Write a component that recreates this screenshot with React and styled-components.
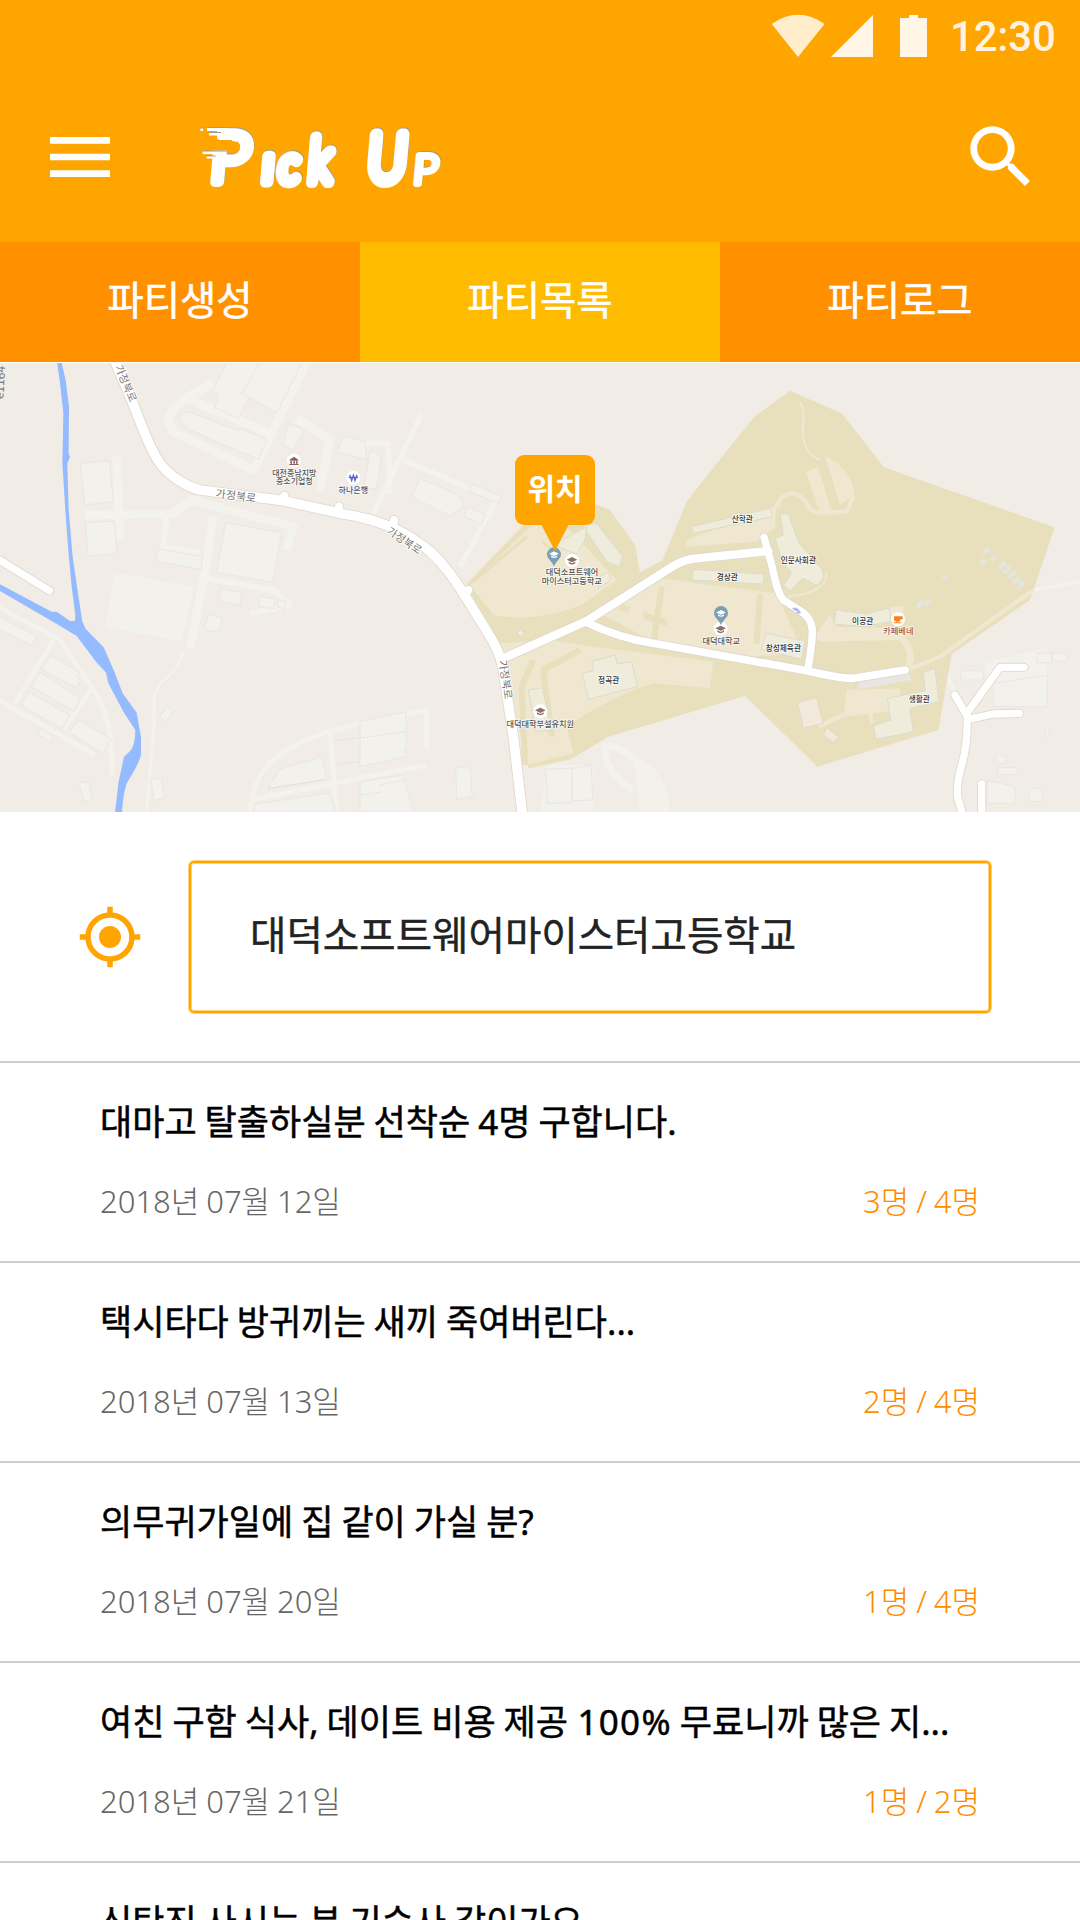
import React from "react";
import styled, { createGlobalStyle } from "styled-components";
import { MdMenu, MdSearch, MdMyLocation } from "react-icons/md";

const GlobalStyle = createGlobalStyle`
  * { box-sizing: border-box; }
  html, body { margin: 0; padding: 0; background: #fff; }
  body { font-family: "Noto Sans", "Noto Sans CJK KR", sans-serif; overflow: hidden; }
`;

const Screen = styled.div`
  width: 1080px;
  height: 1920px;
  overflow: hidden;
  display: flex;
  flex-direction: column;
  background: #fff;
`;

const Header = styled.header`
  height: 242px;
  flex: none;
  background: #ffa500;
  color: #fff;
`;

const StatusBar = styled.div`
  height: 72px;
  display: flex;
  justify-content: flex-end;
  padding: 0 24px 0 0;
`;

const StatusIcons = styled.svg`
  width: 160px;
  height: 72px;
  margin-right: 20px;
  display: block;
`;

const Clock = styled.span`
  width: 106px;
  font: 500 42px/73px Roboto, sans-serif;
  letter-spacing: -0.2px;
  color: rgba(255, 255, 255, 0.9);
  white-space: nowrap;
`;

const AppBar = styled.div`
  height: 170px;
  display: flex;
  align-items: center;
  padding: 0 38px 0 40px;
`;

const IconButton = styled.button`
  border: 0;
  padding: 0;
  background: none;
  color: inherit;
  display: flex;
  font-size: ${(p) => p.$size}px;
`;

const Logo = styled.svg`
  width: 260px;
  height: 85px;
  margin: 1px auto 0 70px;
  display: block;
  overflow: visible;
`;

const Tabs = styled.nav`
  height: 120px;
  flex: none;
  display: grid;
  grid-template-columns: repeat(3, 1fr);
`;

const Tab = styled.button`
  border: 0;
  padding: 0 0 9px;
  background: ${(p) => (p.$active ? "#ffbb00" : "#ff9100")};
  color: #fff;
  font: 400 39.5px/1 "Noto Sans CJK KR", sans-serif;
  -webkit-text-stroke: 0.5px currentColor;
`;

const MapArea = styled.section`
  position: relative;
  height: 449px;
  margin-top: 1px;
  flex: none;
`;

const MapCanvas = styled.svg`
  width: 1080px;
  height: 449px;
  display: block;
`;

const Marker = styled.div`
  position: absolute;
  left: 515px;
  top: 92px;
  width: 80px;
  height: 70px;
  border-radius: 9px;
  background: #ffa500;
  color: #fff;
  display: flex;
  justify-content: center;
  font: 700 30px/64px "Noto Sans CJK KR", sans-serif;

  &::after {
    content: "";
    position: absolute;
    left: 26px;
    top: 69px;
    border: solid transparent;
    border-width: 27px 14px 0;
    border-top-color: #ffa500;
  }
`;

const SearchRow = styled.section`
  height: 249px;
  flex: none;
  display: flex;
  align-items: center;
  padding: 0 89px 0 77px;
  gap: 46px;
  color: #ffa500;
`;

const PlaceField = styled.div`
  flex: 1;
  height: 152px;
  border: 2px solid #ffa500;
  border-radius: 5px;
  box-shadow: 0 0 0 1px rgba(255, 165, 0, 0.5), inset 0 0 0 1px rgba(255, 165, 0, 0.5);
  display: flex;
  align-items: center;
  padding: 0 59px 8px;
  color: #222;
  font: 400 39.6px/1 "Noto Sans CJK KR", sans-serif;
  -webkit-text-stroke: 0.4px currentColor;
  white-space: nowrap;
`;

const List = styled.ul`
  list-style: none;
  margin: 0;
  padding: 0;
`;

const Row = styled.li`
  height: 200px;
  border-top: 2px solid #cecece;
  padding: 34px 100px 0;
`;

const Title = styled.h2`
  margin: 0;
  font: 400 35px/50px "Noto Sans", "Noto Sans CJK KR", sans-serif;
  -webkit-text-stroke: 0.5px currentColor;
  word-spacing: -1.1px;
  color: #000;
  white-space: nowrap;
`;

const Percent = styled.span`
  letter-spacing: 1.3px;
  margin-left: 1.5px;
`;

const Meta = styled.div`
  display: flex;
  justify-content: space-between;
  margin-top: 30px;
  font: 300 31px/48px "Noto Sans", "Noto Sans CJK KR", sans-serif;
  word-spacing: -1.2px;
  color: #666;
  white-space: nowrap;
`;

const Count = styled.span`
  color: #ff8c00;
`;

const parties = [
  { title: "대마고 탈출하실분 선착순 4명 구합니다.", date: "2018년 07월 12일", count: "3명 / 4명" },
  { title: "택시타다 방귀끼는 새끼 죽여버린다...", date: "2018년 07월 13일", count: "2명 / 4명" },
  { title: "의무귀가일에 집 같이 가실 분?", date: "2018년 07월 20일", count: "1명 / 4명" },
  { title: "여친 구함 식사, 데이트 비용 제공 100% 무료니까 많은 지...", date: "2018년 07월 21일", count: "1명 / 2명" },
  { title: "신탄진 사시는 분 기숙사 같이가요", date: "2018년 07월 22일", count: "1명 / 4명" },
];

const logoLetters = [
  { ch: "P", x: 18, y: 67, size: 69, stroke: 10, sx: 1.02, sy: 1 },
  { ch: "ı", x: 71, y: 66.5, size: 52, stroke: 11, sx: 1, sy: 1 },
  { ch: "c", x: 88, y: 66.5, size: 49, stroke: 12, sx: 0.86, sy: 1 },
  { ch: "k", x: 117, y: 66.5, size: 50, stroke: 10, sx: 0.98, sy: 1.22 },
  { ch: "U", x: 176, y: 66, size: 65, stroke: 13, sx: 0.83, sy: 1 },
  { ch: "P", x: 222, y: 69, size: 41, stroke: 6, sx: 1.06, sy: 1 },
];

const Letters = ({ color }) =>
  logoLetters.map((l, i) => (
    <text
      key={i}
      transform={`translate(${l.x} ${l.y}) skewX(-5) scale(${l.sx} ${l.sy})`}
      fontFamily="Lato, sans-serif"
      fontWeight="300"
      fontSize={l.size}
      fill={color}
      stroke={color}
      strokeWidth={l.stroke}
      strokeLinejoin="round"
      strokeLinecap="round"
    >
      {l.ch}
    </text>
  ));

const SpeedLines = ({ color }) => (
  <g fill={color}>
    <rect x="10.5" y="13.5" width="2.5" height="2.5" />
    <rect x="17" y="13" width="20" height="3" />
    <rect x="19" y="18" width="12" height="2.5" />
    <rect x="12.5" y="36.5" width="24" height="2.6" />
    <rect x="16.5" y="41.5" width="9" height="2" />
  </g>
);

const PickUpLogo = () => (
  <Logo viewBox="0 0 260 85">
    <g transform="translate(.6 -.9)">
      <Letters color="#a09a90" />
    </g>
    <Letters color="#fff" />
    <path d="M10 8H27V22Q27 25 30 25H42V35.5H10Z" fill="#ffa500" />
    <g transform="translate(0 -1)">
      <SpeedLines color="#a09a90" />
    </g>
    <SpeedLines color="#fff" />
  </Logo>
);

const Building = ({ d, campus }) => (
  <path
    d={d}
    fill={campus ? "#efecdc" : "#f3f1ec"}
    stroke={campus ? "#dcdccb" : "#e9e6e3"}
    strokeWidth="3"
  />
);

const roads = [
  { d: "M335 -20L395 120C430 210 450 265 480 310C510 350 560 380 600 390L850 422L1030 462C1120 475 1200 508 1250 545C1330 590 1390 700 1440 780C1490 860 1500 880 1510 930L1540 1130L1568 1370", w: 29 },
  { d: "M1505 897L1760 783L2020 618Q2055 597 2090 595L2305 573", w: 25 },
  { d: "M1755 785Q1860 835 1960 850L2420 932Q2520 955 2560 955L2715 930", w: 23 },
  { d: "M2292 532L2308 590C2325 640 2325 690 2350 720L2400 752Q2437 775 2437 815Q2437 850 2424 925", w: 22 },
  { d: "M-10 595L148 692", w: 22 },
  { d: "M2865 1005L2902 1070Q2902 1160 2885 1215Q2865 1290 2875 1320L2890 1370", w: 22 },
  { d: "M3072 922H3000L2902 1058", w: 22 },
  { d: "M3058 1060L2980 1062L2905 1078", w: 22 },
  { d: "M2945 1272V1370", w: 22 },
  { d: "M853 408V425M1017 440V455M1182 480L1178 505M1405 690L1390 705", w: 25 },
];

const buildings = [
  "M242 310L328 302L340 425L254 435Z",
  "M256 488L343 483L352 580L264 590Z",
  "M473 566L608 590L603 628L467 604Z",
  "M677 488L845 518L818 667L650 637Z",
  "M662 687L725 697L721 736L658 723Z",
  "M780 709L826 716L822 746L775 738Z",
  "M835 720L858 724L855 746L831 741Z",
  "M625 763L666 772L660 806L635 816L613 804Z",
  "M680 9L637 95L657 105L643 142L715 176L800 9Z",
  "M780 9L725 100L830 159L905 9Z",
  "M540 178Q540 150 575 158L715 213L722 205L800 240L776 298L655 248L560 205Z",
  "M865 190L913 208L880 270L850 255Z",
  "M1030 228L1095 245L1100 300L1010 276Z",
  "M150 887L238 935L230 950L241 962L230 983L123 928Z",
  "M120 938L242 1015L222 1053L93 980Z",
  "M86 996L208 1065L186 1107L62 1035Z",
  "M235 1080L332 1137L308 1180L207 1117Z",
  "M-5 770L110 828L98 858L-5 808Z",
  "M120 1105L160 1128L150 1145L112 1123Z",
  "M500 1040L520 1053L497 1085L478 1072Z",
  "M452 1258L485 1255L492 1315L462 1322Z",
  "M237 1270L265 1264L277 1316L252 1327Z",
  "M805 1285L840 1228L965 1190L980 1258Z",
  "M765 1332L985 1300L1010 1356H760Z",
  "M1260 358L1300 372L1375 405L1393 440L1350 468L1235 410Z",
  "M1412 370L1506 409L1495 430L1409 395Z",
  "M1402 440L1455 465L1445 492L1392 470Z",
  "M1110 275L1145 285L1130 385L1090 390Z",
  "M1080 1085L1218 1055V1190L1080 1220Z",
  "M1080 1265L1210 1245L1240 1356H1080Z",
  "M1367 1220L1410 1225L1417 1310L1370 1318Z",
  "M1637 1228L1716 1225V1328L1642 1330Z",
  "M1716 1225L1774 1215L1778 1320L1718 1322Z",
  "M2883 932H2950V960H2883Z",
  "M2980 970L3142 945V1040H2980Z",
  "M3110 880L3155 878V908H3110Z",
  "M3158 880H3202V903H3158Z",
  "M2993 1223H3053V1243H2993Z",
  "M2962 1260L3045 1280V1330H2962Z",
  "M3087 1285H3127V1324H3087Z",
  "M2987 1188H3018V1210H2987Z",
  "M3137 1108H3148V1130H3137Z",
];

const campusBuildings = [
  "M1585 990L1627 983L1655 1110L1608 1115Z",
  "M1747 940L1780 932L1776 905L1845 885L1852 912L1895 905L1912 980L1765 1018Z",
  "M1700 505L1790 490L1868 590L1858 620L1820 605L1750 500Z",
  "M1660 555L1760 500L1755 540L1730 582Z",
  "M1800 650L1825 635L1832 660L1795 685Z",
  "M2075 500L2310 445L2317 470L2080 520Z",
  "M2080 628L2290 642V672L2075 660Z",
  "M2340 462H2365L2397 550L2468 630L2470 655L2450 676L2408 655L2370 692L2350 675L2375 640L2345 600L2325 535L2350 525Z",
  "M2508 750L2600 762L2667 744L2672 785L2590 800L2502 792Z",
  "M2298 820L2415 843L2405 898L2284 868Z",
  "M2770 937L2805 925L2817 1025L2730 1045L2740 1115L2628 1138L2620 1098L2672 1080L2662 1015L2775 992Z",
];

const labels = [
  { t: "대전중남지방", x: 883, y: 347, s: 24 },
  { t: "중소기업청", x: 883, y: 372, s: 24 },
  { t: "하나은행", x: 1060, y: 399, s: 24, c: "#4c4f78" },
  { t: "대덕소프트웨어", x: 1716, y: 646, s: 24.5 },
  { t: "마이스터고등학교", x: 1715, y: 672, s: 24.5 },
  { t: "대덕대학부설유치원", x: 1621, y: 1101, s: 24.5 },
  { t: "정곡관", x: 1826, y: 968, s: 23, c: "#333" },
  { t: "산학관", x: 2227, y: 486, s: 23, c: "#333" },
  { t: "인문사회관", x: 2395, y: 609, s: 23, c: "#333" },
  { t: "경상관", x: 2182, y: 661, s: 23, c: "#333" },
  { t: "대덕대학교", x: 2164, y: 851, s: 24.5 },
  { t: "이공관", x: 2588, y: 792, s: 23, c: "#333" },
  { t: "창성체육관", x: 2350, y: 872, s: 23, c: "#333" },
  { t: "생활관", x: 2758, y: 1027, s: 23, c: "#333" },
  { t: "카페베네", x: 2695, y: 822, s: 25, c: "#a2594b" },
];

const roadNames = [
  { x: 344, y: 20, r: 67, s: 32 },
  { x: 646, y: 412, r: 7, s: 33 },
  { x: 1158, y: 518, r: 34, s: 32 },
  { x: 1496, y: 902, r: 81, s: 32 },
];

const Cap = ({ x, y, color = "#8d6e68", s = 1 }) => (
  <g transform={`translate(${x} ${y}) scale(${s})`} fill={color}>
    <path d="M-16 -3L0 -11L16 -3L0 5Z" />
    <path d="M-10 3L0 8L10 3V8Q0 15 -10 8Z" />
  </g>
);

const SchoolPin = ({ x, y }) => (
  <g transform={`translate(${x} ${y})`}>
    <path d="M0 34C-3 20 -21 12 -21 -3A21 21 0 0 1 21 -3C21 12 3 20 0 34Z" fill="#7d9fb4" />
    <Cap x={0} y={-2} color="#fff" s={0.9} />
  </g>
);

const CampusMap = () => (
  <MapCanvas viewBox="0 9 3240 1347">
    <rect y="9" width="3240" height="1347" fill="#f1ede6" />

    <g fill="none" stroke="#f3f2ec" strokeWidth="26" strokeLinejoin="round">
      <path d="M640 70C530 120 480 170 520 215L760 330L920 9" />
      <path d="M560 115L820 225M890 175L990 240L960 390" />
      <path d="M255 465L520 462L575 420L880 500L860 570M640 470L610 660L570 865M350 290L360 540" />
      <path d="M500 470L490 560L600 580M620 655L820 690L870 735L750 760" strokeWidth="18" />
      <path d="M548 870Q550 915 480 970L462 1010V1100L440 1356" strokeWidth="9" />
      <path d="M-5 740L180 840L275 980Q345 1080 335 1245M160 840L45 1030M-5 1020L285 1185M270 990L190 1110" strokeWidth="14" />
      <path d="M750 1356C760 1230 820 1170 985 1115L1080 1090L1280 1050V1170M990 1110L1010 1356M750 1320L1280 1215" strokeWidth="14" />
      <path d="M1265 160L1120 460M1080 250L1165 250L1170 400M1210 300L1490 420L1380 620" strokeWidth="16" />
      <path d="M1815 1150Q1810 1240 1900 1290M1820 1155Q1960 1190 1990 1356" strokeWidth="22" />
      <path d="M2820 900L2870 1010M3100 690L3240 665" strokeWidth="12" />
    </g>
    <path d="M343 636L582 682L545 843L316 800Z" fill="#f3f2ea" />
    <path d="M1640 1215H1780V1356H1620ZM2955 905L3140 865V950L2960 990Z" fill="#f3f1ec" />
    <path d="M1900 1190Q2000 1220 2010 1356H1920Z" fill="#f3f1ea" />

    {buildings.map((d) => (
      <Building key={d} d={d} />
    ))}
    <g stroke="#d8d4e2" strokeWidth="2" strokeDasharray="7 4" fill="none">
      <path d="M805 1287L978 1258M1000 1143L1080 1134L1218 1115M1020 1212L1080 1205M1215 1170V1180M1140 1275L1215 1260M1085 1305L1145 1296" />
    </g>

    <path
      d="M2370 92L2525 160L2652 322L3164 502L3090 720L2855 882L2815 1110L2452 1220L2235 1008L1825 1130L1712 1198L1585 1225L1550 1010L1500 880L1400 672L1570 495L1780 430L1830 450L1905 555L1920 637L1988 600L2060 425L2160 298L2265 168Z"
      fill="#e8dfbd"
    />
    <g fill="#efe7cf">
      <path d="M1410 675L1575 515Q1620 470 1690 490L1850 660L1745 735Q1600 790 1480 765Z" />
      <path d="M1810 765L1980 655L2330 700L2410 880L2250 890L1960 845Z" />
      <path d="M1500 850L1650 840L1780 860L2140 905L2130 985L1960 970Q1830 1010 1700 1100L1720 1180L1580 1215Z" />
      <path d="M2418 335L2455 320L2495 455L2460 460ZM2475 288Q2560 330 2563 405L2520 435Z" />
      <path d="M2060 540L2330 435L2325 500L2270 545L2060 560Z" />
      <path d="M2540 990L2700 985V1050L2530 1070Z" />
      <path d="M2440 835L2490 765L2510 800L2720 805V840L2460 845ZM2668 740L2710 738L2712 770H2670Z" />
    </g>
    <g fill="none" stroke="#efe7cf" strokeWidth="13">
      <path d="M2400 125Q2415 150 2408 210Q2410 280 2460 300" strokeWidth="7" />
      <path d="M2330 445C2340 390 2400 390 2420 430Q2430 460 2470 458L2540 455L2562 405" />
      <path d="M2720 930L2820 890L3100 690M2455 1100L2540 1060M2600 990L2615 1090" />
      <path d="M2700 830Q2745 870 2725 920" strokeWidth="20" />
      <path d="M2360 710Q2480 700 2480 640" strokeWidth="7" />
    </g>
    <g fill="none" stroke="#e8dfbd" strokeWidth="18">
      <path d="M1575 1215L1565 980L1600 900M1655 1130L1630 930L1740 870M1960 850L1985 680M1860 740L2000 790" />
      <path d="M2280 700L2270 850" />
      <path d="M1420 665L1580 530M1625 545L1665 575" strokeWidth="8" />
    </g>
    <circle cx="1907" cy="764" r="25" fill="#efe7cf" />
    {campusBuildings.map((d) => (
      <Building key={d} d={d} campus />
    ))}
    <path d="M2393 1027L2450 1013L2470 1090L2410 1105ZM2480 1102L2515 1130L2500 1148L2470 1125Z" fill="#f1e9dc" stroke="#e2dac8" strokeWidth="3" />
    <path d="M2575 965L2725 935L2735 960L2575 988Z" fill="#e8e5e3" />
    <g stroke="#e3e5df" strokeWidth="14" fill="none">
      <path d="M2950 580L2968 565M2940 612L2956 600M2975 600L2985 590M2998 625L3015 605M3013 640L3030 620M3027 655L3044 635M3041 672L3058 652M3055 687L3070 665M2752 740L2770 725M2775 735L2792 720M2830 658L2840 648" />
    </g>
    <path d="M1550 818L1562 808L1573 820L1561 832Z" fill="#efecdc" stroke="#d5dacb" strokeWidth="3" />

    <g fill="#94bbff">
      <path d="M171 5H184L197 60L207 140L206 280L210 292L202 310L206 450L218 590L234 700L247 785L258 808L311 862L345 940L368 1000L410 1058L423 1130V1185Q415 1215 380 1270Q368 1310 366 1360H345L355 1270L372 1190L385 1178Q405 1165 406 1110L372 1058L325 970L318 938L288 905L230 828L150 780L-5 690V670L155 755H170L210 783H225L226 765L215 680L204 560L196 450L187 310L190 160L180 70Z" />
    </g>

    {roads.map((r) => (
      <path key={`casing-${r.d}`} d={r.d} fill="none" stroke="#dcd8ca" strokeWidth={r.w + 5} strokeLinecap="round" strokeLinejoin="round" />
    ))}
    {roads.map((r) => (
      <path key={r.d} d={r.d} fill="none" stroke="#fff" strokeWidth={r.w} strokeLinecap="round" strokeLinejoin="round" />
    ))}
    <path d="M2378 744L2390 752M2386 744L2398 754M2390 757L2402 758" stroke="#a9b4f4" strokeWidth="5" fill="none" />

    <g fontFamily='"Noto Sans CJK KR", sans-serif'>
      {roadNames.map((n) => (
        <text key={n.x} transform={`translate(${n.x} ${n.y}) rotate(${n.r})`} fontSize={n.s} fill="#777" stroke="#fff" strokeWidth="5" paintOrder="stroke">
          가정북로
        </text>
      ))}
      <text transform="translate(10 118) rotate(-87)" fontSize="36" fill="#777">
        e1164
      </text>
    </g>

    <g fill="#fff">
      <circle cx="882" cy="302" r="21" />
      <circle cx="1060" cy="353" r="21" />
      <circle cx="1716" cy="602" r="21" />
      <circle cx="1621" cy="1054" r="21" />
      <circle cx="2162" cy="806" r="21" />
      <circle cx="2694" cy="778" r="21" />
    </g>
    <path d="M869 299L882 290L895 299V302H869ZM871 304H876V311H871ZM880 304H885V311H880ZM888 304H893V311H888ZM868 312H896V315H868Z" fill="#8d5f58" />
    <path d="M1049 344L1055 362L1060 346L1065 362L1071 344M1046 352H1074" fill="none" stroke="#5a67d0" strokeWidth="4" />
    <Cap x={1716} y={602} />
    <Cap x={1621} y={1054} />
    <Cap x={2162} y={808} />
    <path d="M2682 769H2708V778H2702Q2701 785 2696 785H2688Q2682 784 2682 778ZM2681 787H2704V790H2681Z" fill="#ff7f1e" />
    <SchoolPin x={1662} y={586} />
    <SchoolPin x={2163} y={762} />

    <g fontFamily='"Noto Sans CJK KR", sans-serif' fontWeight="500" textAnchor="middle" stroke="#fff" strokeOpacity=".75" strokeWidth="5" paintOrder="stroke">
      {labels.map((l) => (
        <text key={l.t} x={l.x} y={l.y} fontSize={l.s} fill={l.c || "#555"}>
          {l.t}
        </text>
      ))}
    </g>
  </MapCanvas>
);

const TitleText = ({ text }) =>
  text.split(/(\d+%)/).map((part, i) => (part.endsWith("%") ? <Percent key={i}>{part}</Percent> : part));

export default function App() {
  return (
    <Screen>
      <GlobalStyle />
      <Header>
        <StatusBar>
          <StatusIcons viewBox="770 0 160 72">
            <path d="M771.7 24Q798 5.500 824.6 24L798 57Z" fill="#ffedcc" />
            <path d="M831 57L873 15V57Z" fill="#fff6e6" />
            <path d="M900 18H909V15H918V18H927V57H900Z" fill="#fff6e6" />
          </StatusIcons>
          <Clock>12:30</Clock>
        </StatusBar>
        <AppBar>
          <IconButton $size={80} aria-label="menu">
            <MdMenu />
          </IconButton>
          <PickUpLogo />
          <IconButton $size={82} aria-label="search">
            <MdSearch />
          </IconButton>
        </AppBar>
      </Header>
      <Tabs>
        <Tab>파티생성</Tab>
        <Tab $active>파티목록</Tab>
        <Tab>파티로그</Tab>
      </Tabs>
      <MapArea>
        <CampusMap />
        <Marker>위치</Marker>
      </MapArea>
      <SearchRow>
        <IconButton $size={66} aria-label="current location">
          <MdMyLocation />
        </IconButton>
        <PlaceField>대덕소프트웨어마이스터고등학교</PlaceField>
      </SearchRow>
      <List>
        {parties.map((p) => (
          <Row key={p.title}>
            <Title>
              <TitleText text={p.title} />
            </Title>
            <Meta>
              <span>{p.date}</span>
              <Count>{p.count}</Count>
            </Meta>
          </Row>
        ))}
      </List>
    </Screen>
  );
}
